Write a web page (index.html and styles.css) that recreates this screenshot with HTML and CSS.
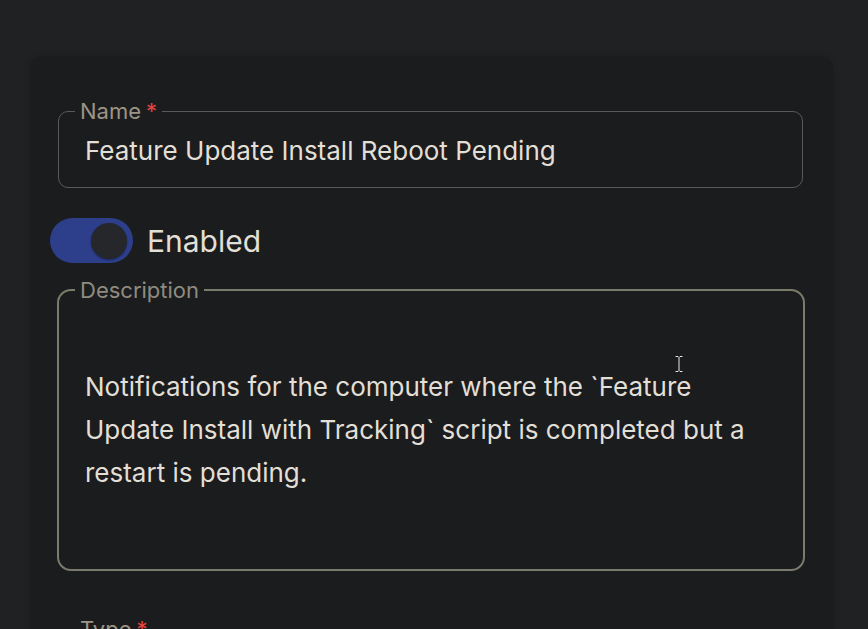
FILE: index.html
```html
<!DOCTYPE html>
<html lang="en">
<head>
<meta charset="utf-8">
<title>Notification</title>
<link rel="stylesheet" href="styles.css">
</head>
<body>
<main class="card">
  <fieldset class="field">
    <legend class="label">Name<span class="req">*</span></legend>
    <div class="value">Feature Update Install Reboot Pending</div>
  </fieldset>

  <div class="toggle-row">
    <span class="toggle"><span class="thumb"></span></span>
    <span class="toggle-label">Enabled</span>
  </div>

  <fieldset class="field field-focus">
    <legend class="label">Description</legend>
    <div class="textarea">Notifications for the computer where the `Feature Update Install with Tracking` script is completed but a restart is pending.</div>
    <svg class="cursor" width="8" height="16" viewBox="0 0 8 16"><path d="M0.5 0.5h2.5l1 1 1-1h2.5M4 1.5v13M0.5 15.5h2.5l1-1 1 1h2.5" fill="none" stroke="#e8e8e8" stroke-width="1"/></svg>
  </fieldset>

  <fieldset class="field field-type">
    <legend class="label">Type<span class="req">*</span></legend>
    <div class="value">&nbsp;</div>
  </fieldset>
</main>
</body>
</html>
```
FILE: styles.css
```css
html, body {
  margin: 0;
  padding: 0;
  background: #202123;
  height: 100%;
  overflow: hidden;
}
body {
  font-family: Inter, "Noto Sans", sans-serif;
  color: #e2dfd6;
  padding: 56px 35px 0 30px;
}
.card {
  background: #1b1c1e;
  border-radius: 14px;
  padding: 42px 30px 40px 27px;
  min-height: 700px;
  box-shadow: 0 0 6px rgba(0,0,0,0.15);
  display: flex;
  flex-direction: column;
}
.field {
  position: relative;
  margin: 0 0 0 1px;
  border: 1px solid #58595a;
  border-radius: 10px;
  padding: 0 27px 20px 26px;
  min-width: 0;
}
.label {
  margin-left: -10px;
  padding: 0 5px;
  font-size: 22px;
  line-height: 26px;
  color: #9c9587;
}
.req {
  color: #e5453f;
  margin-left: 5px;
}
.value {
  padding-top: 11px;
  font-size: 26px;
  line-height: 32px;
  color: #e2dfd6;
}
.toggle-row {
  display: flex;
  align-items: center;
  margin: 30px 0 14px -7px;
  gap: 14px;
}
.toggle {
  width: 83px;
  height: 45px;
  border-radius: 23px;
  background: #2d3e8b;
  display: flex;
  align-items: center;
  justify-content: flex-end;
  padding-right: 6px;
  box-sizing: border-box;
}
.thumb {
  width: 36px;
  height: 36px;
  border-radius: 50%;
  background: #25272a;
  box-shadow: 0 1px 2px rgba(0,0,0,0.4);
}
.toggle-label {
  font-size: 30px;
  color: #e2dfd6;
  line-height: 36px;
}
.field-focus {
  border: 2px solid #7b7b6b;
  border-radius: 14px;
  margin: 0 -2px 0 0;
  padding: 0 32px 0 26px;
}
.field-focus .label {
  color: #8f8b80;
}
.textarea {
  font-size: 26px;
  line-height: 43px;
  height: 204px;
  padding-top: 62px;
  color: #e2dfd6;
}
.cursor {
  position: absolute;
  left: 616px;
  top: 53px;
}
.field-type {
  margin-top: 45px;
}
```
